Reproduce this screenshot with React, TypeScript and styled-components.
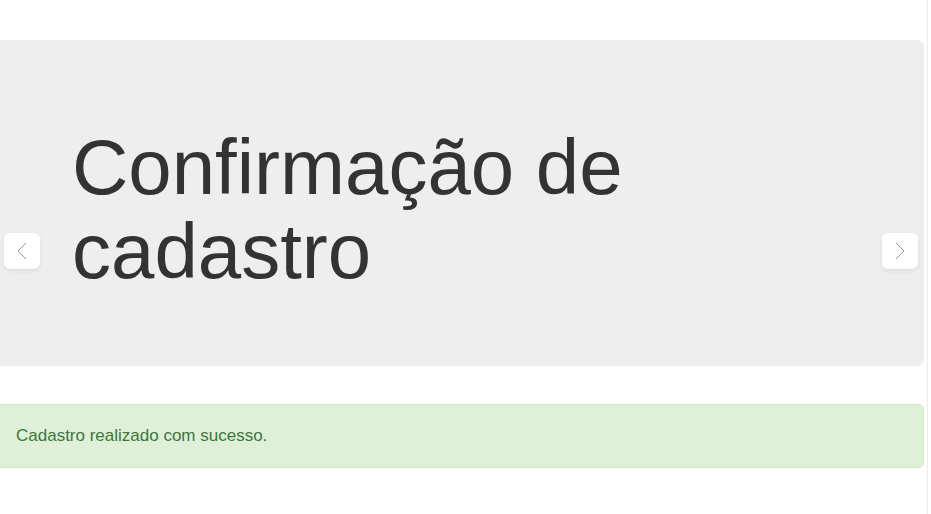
import { createGlobalStyle } from "styled-components";
import styled from "styled-components";

const GlobalStyle = createGlobalStyle`
  html, body {
    margin: 0;
    padding: 0;
    background: #fff;
  }
  body {
    font-family: "Liberation Sans", Arial, sans-serif;
    overflow: hidden;
  }
`;

const Page = styled.div`
  display: flex;
  width: 931px;
  height: 514px;
`;

const Main = styled.main`
  flex: 1;
  min-width: 0;
  padding-top: 40px;
  margin-right: 1px;
  overflow: hidden;
`;

const Rail = styled.div`
  flex: 0 0 3px;
  margin-left: 2px;
  border-left: 1px solid #ececec;
`;

const Slide = styled.section`
  position: relative;
  margin-left: -10px;
  height: 326px;
  box-sizing: border-box;
  padding: 85px 0 0 82px;
  background: #eee;
  border-radius: 7px;

  h1 {
    margin: 0;
    font-size: 78px;
    line-height: 84px;
    font-weight: 400;
    color: #333;
  }
`;

const Arrow = styled.button<{ $side: "left" | "right" }>`
  position: absolute;
  top: 193px;
  ${(p) => (p.$side === "left" ? "left: 14px;" : "right: 6px;")}
  width: 36px;
  height: 36px;
  padding: 0;
  display: flex;
  align-items: center;
  justify-content: center;
  border: none;
  border-radius: 6px;
  background: #fff;
  box-shadow: 0 2px 4px rgba(0, 0, 0, 0.08);
  cursor: pointer;

  svg {
    width: 10px;
    height: 18px;
  }
`;

const Alert = styled.div`
  margin: 38px 0 0 -10px;
  padding: 19px 15px 19px 25px;
  font-size: 17px;
  line-height: 24px;
  color: #3c763d;
  background: #dff0d8;
  border: 1px solid #d6e9c6;
  border-radius: 5px;
`;

const Chevron = ({ dir }: { dir: "left" | "right" }) => (
  <svg viewBox="0 0 10 18" fill="none">
    <path
      d={dir === "left" ? "M9 1L1 9l8 8" : "M1 1l8 8-8 8"}
      stroke="#999"
      strokeWidth="1"
    />
  </svg>
);

export default function App() {
  return (
    <>
      <GlobalStyle />
      <Page>
        <Main>
          <Slide>
            <h1>
              Confirmação de
              <br />
              cadastro
            </h1>
            <Arrow $side="left" aria-label="Anterior">
              <Chevron dir="left" />
            </Arrow>
            <Arrow $side="right" aria-label="Próximo">
              <Chevron dir="right" />
            </Arrow>
          </Slide>
          <Alert>Cadastro realizado com sucesso.</Alert>
        </Main>
        <Rail />
      </Page>
    </>
  );
}
